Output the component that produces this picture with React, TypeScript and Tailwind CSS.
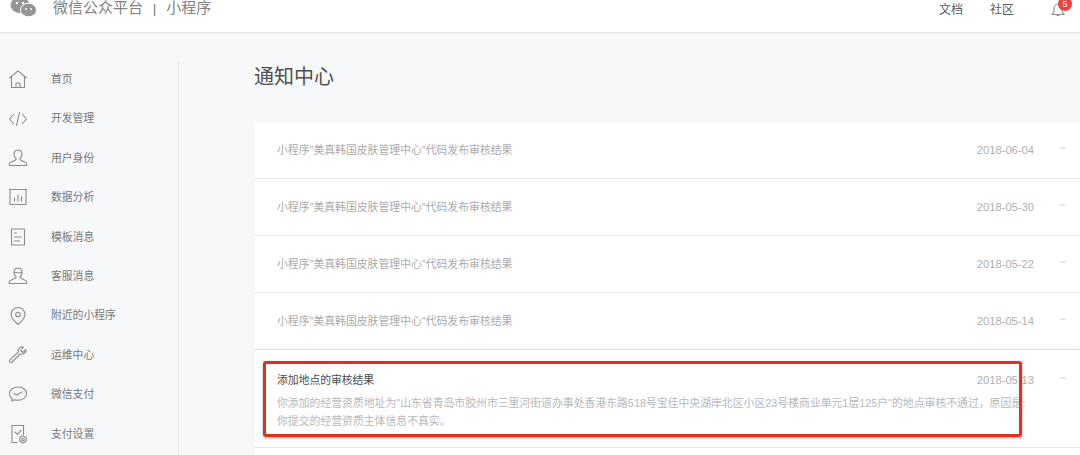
import React from 'react';

const FONT = 'font-["Liberation_Sans","Noto_Sans_CJK_SC",sans-serif]';

const Ico: React.FC<{ children: React.ReactNode }> = ({ children }) => (
  <svg width="20" height="20" viewBox="0 0 20 20" fill="none" stroke="#8c8c8c" strokeWidth="1.100" strokeLinejoin="round" strokeLinecap="round">
    {children}
  </svg>
);

const USER_PATH =
  'M10 2c-2.600 0-4 1.900-4 4.200 0 1.800.8 3.100 1.700 4 .6.700.4 1.500-.4 1.900l-4.800 2.500c-.9.400-1.200 1-1.200 1.700v1.200h17.400v-1.200c0-.7-.3-1.300-1.200-1.700l-4.800-2.500c-.8-.4-1-1.200-.4-1.900.9-.9 1.700-2.200 1.700-4 0-2.300-1.400-4.200-4-4.200Z';

const NAV_ITEMS: { label: string; icon: React.ReactNode }[] = [
  {
    label: '首页',
    icon: (
      <Ico>
        <path d="M1.500 9 10 1.800 18.500 9M3.500 8v10.500h13V8M8 18.500V14h4v4.500" />
      </Ico>
    ),
  },
  {
    label: '开发管理',
    icon: (
      <Ico>
        <path d="M5.500 5.500 1.500 10l4 4.500M14.500 5.500l4 4.500-4 4.500M11.500 3.500 8.500 16.500" />
      </Ico>
    ),
  },
  {
    label: '用户身份',
    icon: (
      <Ico>
        <path d={USER_PATH} />
      </Ico>
    ),
  },
  {
    label: '数据分析',
    icon: (
      <Ico>
        <path d="M1.500 2.500h17M2 2.500v15h16v-15M6.500 14v-3M10 14V8M13.500 14v-4.500" />
      </Ico>
    ),
  },
  {
    label: '模板消息',
    icon: (
      <Ico>
        <path d="M3.500 2h13v16h-13zM6.500 6h2M6.500 10h7M6.500 14h5" />
      </Ico>
    ),
  },
  {
    label: '客服消息',
    icon: (
      <Ico>
        <path d={USER_PATH} />
        <path d="M6 6.500c2.700.4 5.300.4 8 0" />
      </Ico>
    ),
  },
  {
    label: '附近的小程序',
    icon: (
      <Ico>
        <path d="M10 18.500c-4-3.500-7-6.500-7-10a7 7 0 0 1 14 0c0 3.500-3 6.500-7 10Z" />
        <circle cx="10" cy="8.500" r="2.300" />
      </Ico>
    ),
  },
  {
    label: '运维中心',
    icon: (
      <Ico>
        <path d="M18 4.500 14.800 7.500 12.500 5.500 15.500 2.200C12.500 1 9.500 3.500 10.300 7L2 14.800c-.8.800-.8 1.500-.2 2.200.6.700 1.500.8 2.300 0l8-8c3.500 1 6.500-1.500 5.900-4.500Z" />
      </Ico>
    ),
  },
  {
    label: '微信支付',
    icon: (
      <Ico>
        <path d="M10 3c-5 0-8.500 3-8.500 6.800 0 2 1 3.700 2.700 4.900L3.800 17l2.700-1.300c1.100.3 2.300.5 3.500.5 5 0 8.500-2.900 8.500-6.400C18.500 6 15 3 10 3Z" />
        <path d="m6 9.500 2.500 1.800 5.500-3.300" />
      </Ico>
    ),
  },
  {
    label: '支付设置',
    icon: (
      <Ico>
        <path d="M9 18.500H4V1.500h11.500v9M7 8l2.300 2.300L13 6.500" />
        <circle cx="15" cy="15.500" r="1.300" />
        <path d="m15 11.800 3.200 1.800v3.700L15 19.100l-3.200-1.800v-3.700Z" />
      </Ico>
    ),
  },
];

const ROWS = [
  { title: '小程序"美真韩国皮肤管理中心"代码发布审核结果', date: '2018-06-04' },
  { title: '小程序"美真韩国皮肤管理中心"代码发布审核结果', date: '2018-05-30' },
  { title: '小程序"美真韩国皮肤管理中心"代码发布审核结果', date: '2018-05-22' },
  { title: '小程序"美真韩国皮肤管理中心"代码发布审核结果', date: '2018-05-14' },
];

const Caret = () => <span className="ml-[26px] mt-[-5px] block w-[6px] h-[2px] rounded-full bg-[#e6e6e6]" />;

export default function App() {
  return (
    <div className={`w-[1080px] h-[455px] overflow-hidden relative bg-[#f7f8fa] ${FONT}`}>
      <header className="h-[33px] bg-white border-b border-[#e8e9ea] shadow-[0_1px_2px_rgba(0,0,0,0.04)] flex items-start pl-[10px] pr-[8px]">
        <svg width="27" height="20" viewBox="0 0 27 20" className="mt-[-3px]">
          <ellipse cx="10" cy="8" rx="9.500" ry="8" fill="#959595" />
          <ellipse cx="18.500" cy="13" rx="8" ry="6.800" fill="#959595" stroke="#fff" strokeWidth="1" />
          <circle cx="7" cy="6" r="1.200" fill="#fff" />
          <circle cx="13" cy="6" r="1.200" fill="#fff" />
          <circle cx="16" cy="12" r="1" fill="#fff" />
          <circle cx="21" cy="12" r="1" fill="#fff" />
        </svg>
        <div className="ml-[16px] mt-[-2px] text-[15px] leading-[20px] text-[#828282] whitespace-nowrap">
          微信公众平台<span className="mx-[10px] text-[12px] text-[#666666]">|</span>小程序
        </div>
        <div className="ml-auto flex items-start">
          <span className="mr-[27px] text-[12px] leading-[18px] mt-[0.500px] text-[#5a5a5a]">文档</span>
          <span className="mr-[37px] text-[12px] leading-[18px] mt-[0.500px] text-[#5a5a5a]">社区</span>
          <span className="relative block w-[21px] h-[16px]">
            <svg width="14" height="14" viewBox="0 0 14 14" fill="none" stroke="#969696" strokeWidth="1.200" className="mt-[2px]">
              <path d="M1 12.500c1.500-1 2-2 2-4.500 0-3 1.500-6 4-6s4 3 4 6c0 2.500.5 3.500 2 4.500ZM5.500 13.500h3" />
            </svg>
            <span className="absolute left-[7px] top-[-3px] w-[14px] h-[14px] pt-[3px] rounded-full bg-[#f0403c] text-white text-[9px] leading-[9px] text-center">5</span>
          </span>
        </div>
      </header>

      <div className="flex h-[422px]">
        <aside className="w-[179px] shrink-0 pt-[29px] h-full">
          <nav className="border-r border-[#e6e7e9] h-full">
            {NAV_ITEMS.map((item) => (
              <div key={item.label} className="h-[39.400px] pb-[5px] flex items-center pl-[8px]">
                <span className="w-[20px] h-[20px] shrink-0">{item.icon}</span>
                <span className="ml-[23px] text-[10.800px] text-[#777777] whitespace-nowrap">{item.label}</span>
              </div>
            ))}
          </nav>
        </aside>

        <main className="flex-1 pl-[75px] min-w-0">
          <h1 className="mt-[30px] h-[28px] text-[20px] leading-[28px] font-normal text-[#505050]">通知中心</h1>
          <div className="mt-[31px] bg-white rounded-tl-[3px] shadow-[0_0_3px_rgba(0,0,0,0.04)]">
            {ROWS.map((row) => (
              <div key={row.date} className="h-[57px] border-b border-[#e7e7e7] pl-[23px] pr-[14px] flex items-center">
                <span className="flex-1 text-[10.850px] text-[#ababab] whitespace-nowrap">{row.title}</span>
                <span className="text-[11.200px] text-[#b0b0b0]">{row.date}</span>
                <Caret />
              </div>
            ))}
            <div className="h-[98px] border-b border-[#e7e7e7] pl-[23px] pr-[14px] pt-[21px] shadow-[0_-2px_4px_rgba(0,0,0,0.03)]">
              <div className="flex items-center h-[18px]">
                <span className="flex-1 text-[10.800px] text-[#4a4a4a] whitespace-nowrap">添加地点的审核结果</span>
                <span className="text-[11.200px] text-[#b0b0b0]">2018-05-13</span>
                <Caret />
              </div>
              <p className="mt-[5px] w-[770px] text-[10.850px] leading-[18px] text-[#b8b8b8] whitespace-nowrap">
                你添加的经营资质地址为"山东省青岛市胶州市三里河街道办事处香港东路518号宝佳中央湖岸北区小区23号楼商业单元1层125户"的地点审核不通过，原因是:
                <br />
                你提交的经营资质主体信息不真实。
              </p>
            </div>
            <div className="h-[20px]" />
          </div>
        </main>
      </div>

      {/* red annotation drawn over the screenshot */}
      <div className="absolute left-[263px] top-[361px] w-[759px] h-[76px] border-[3px] border-[#e0301e] rounded-[3px] shadow-[0_1px_3px_rgba(0,0,0,0.35)]" />
    </div>
  );
}
